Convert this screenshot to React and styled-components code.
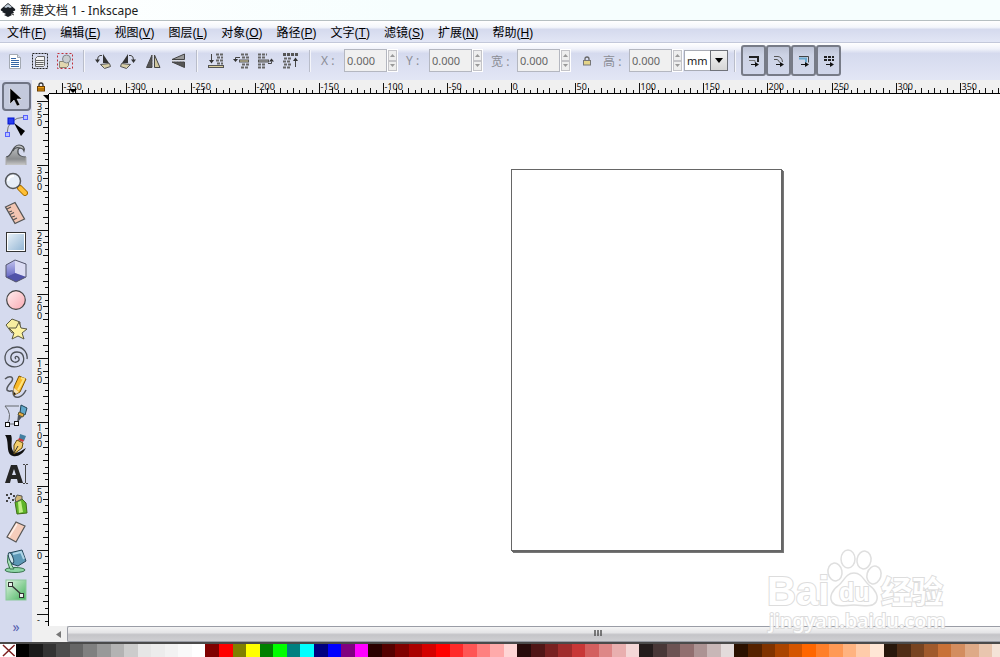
import React, { useEffect, useState } from "react";
import styled, { createGlobalStyle } from "styled-components";

const colors = {
  panel: "#d5daee",
  panelLight: "#e2e6f5",
  ruler: "#f0f0f0",
  text: "#1a1a1a",
  disabled: "#8b8d96",
  edge: "#9a9da6",
};

const fonts = `"Noto Sans", "Noto Sans CJK SC", sans-serif`;
const menuFonts = `"Liberation Sans", "Noto Sans CJK SC", sans-serif`;

const MM = 1.282;

const menus = [
  ["文件", "F"],
  ["编辑", "E"],
  ["视图", "V"],
  ["图层", "L"],
  ["对象", "O"],
  ["路径", "P"],
  ["文字", "T"],
  ["滤镜", "S"],
  ["扩展", "N"],
  ["帮助", "H"],
];

const swatches = `
000000 1a1a1a 333333 4d4d4d 666666 808080 999999 b3b3b3 cccccc e6e6e6 ececec f2f2f2 f9f9f9 ffffff
800000 ff0000 808000 ffff00 008000 00ff00 008080 00ffff 000080 0000ff 800080 ff00ff
2b0000 550000 800000 aa0000 d40000 ff0000 ff2a2a ff5555 ff8080 ffaaaa ffd5d5
280b0b 501616 782121 a02c2c c83737 d35f5f de8787 e9afaf f4d7d7
241c1c 483737 6c5353 916f6f ac9393 c8b7b7 e3dbdb
2b1100 552200 803300 aa4400 d45500 ff6600 ff7f2a ff9955 ffb380 ffccaa ffe6d5
28170b 502d16 784421 a05a2c c87137 d38d5f deaa87 e9c6af f4e3d7
`
  .trim()
  .split(/\s+/);

/* ---------- toolbar icons, 18x18 ---------- */

const PageIcon = () => (
  <Icon viewBox="0 0 18 18">
    <path d="M3.5 2.5h8l3 3v11h-11z" fill="#fff" stroke="#a3a9b2" />
    <path d="M11.5 2.500v3h3" fill="#dde3ea" stroke="#a3a9b2" />
    <path d="M5 6.500h5M5 8.500h8M5 10.500h8M5 12.500h8M5 14.500h8" stroke="#3465a4" />
  </Icon>
);

const LayersIcon = () => (
  <Icon viewBox="0 0 18 18">
    <rect x="1.500" y="1.500" width="15" height="15" fill="none" stroke="#222" strokeDasharray="2 1" />
    <path
      d="M4.500 6.500l2-2h7v3l-1 1h-8zM4.500 10.500h8l1-1v-2M4.500 8.500v6h8l1-1v-4M4.500 12.500h8"
      fill="#f4f4f4"
      stroke="#666"
    />
  </Icon>
);

const DeselectIcon = () => (
  <Icon viewBox="0 0 18 18">
    <rect x="1.500" y="1.500" width="15" height="15" fill="none" stroke="#c0303a" strokeDasharray="2 2" />
    <path d="M3.500 9.500h9v4l-2 2h-7z" fill="#e2d7b0" stroke="#8a8672" />
    <circle cx="10.500" cy="7" r="4" fill="#c9cdd0" stroke="#83878b" />
  </Icon>
);

const RotateIcon = ({ flip }) => (
  <Icon viewBox="0 0 18 18">
    <g transform={flip ? "matrix(-1 0 0 1 18 0)" : undefined}>
      <path d="M9 2v9h6z" fill="#333" />
      <path d="M6.500 12.500l9-1 1 3-6 2z" fill="#d8cfa8" stroke="#555" />
      <path d="M8 3.500H6Q3.500 4 3.500 8" fill="none" stroke="#444" />
      <path d="M1 7.500h5l-2.500 3.500z" fill="#333" />
    </g>
  </Icon>
);

const FlipIcon = ({ vertical }) => (
  <Icon viewBox="0 0 18 18">
    <g transform={vertical ? "rotate(-90 9 9)" : undefined}>
      <path d="M8 3v12.500H2.500z" fill="#555" stroke="#444" />
      <path d="M10.500 3v12.500H16z" fill={vertical ? "#999" : "#cfc69d"} stroke="#444" />
      <path d="M9.300 3v13" stroke="#ddd" strokeDasharray="2 1" />
    </g>
  </Icon>
);

const StackIcon = ({ kind }) => (
  <Icon viewBox="0 0 18 18">
    {kind === "bottom" && (
      <>
        <path d="M9 2.500h8M10 5.500h6M9 8.500h8M10 11.500h6" stroke="#666" strokeWidth="2" strokeDasharray="3 1" />
        <rect x="1.500" y="13.500" width="15" height="2" fill="#d9cf9c" stroke="#555" />
        <path d="M4.500 2v7" stroke="#444" />
        <path d="M2 8h5l-2.500 3.500z" fill="#333" />
      </>
    )}
    {kind === "down" && (
      <>
        <path d="M9 2.500h8M10 5.500h7M10 12.500h7M9 15.500h8" stroke="#666" strokeWidth="2" strokeDasharray="3 1" />
        <rect x="7.500" y="8" width="9" height="2" fill="#d9cf9c" stroke="#555" />
        <path d="M8 5.500H3.500v2" fill="none" stroke="#444" />
        <path d="M1 7h5l-2.500 3z" fill="#333" />
      </>
    )}
    {kind === "up" && (
      <>
        <path d="M1 2.500h9M1 5.500h8M1 12.500h8M1 15.500h7" stroke="#666" strokeWidth="2" strokeDasharray="3 1" />
        <rect x="1.500" y="8" width="10" height="2" fill="#aaa" stroke="#555" />
        <path d="M11 11.500h3.500v-2" fill="none" stroke="#444" />
        <path d="M12 9.500h5l-2.500-3z" fill="#333" />
      </>
    )}
    {kind === "top" && (
      <>
        <path d="M1 2.500h16" stroke="#555" strokeWidth="3" strokeDasharray="3 1" />
        <path d="M2 6.500h7M1 9.500h8M2 12.500h7M1 15.500h8" stroke="#666" strokeWidth="2" strokeDasharray="3 1" />
        <path d="M13.500 15V8" stroke="#444" />
        <path d="M11 9h5l-2.500-3.500z" fill="#333" />
      </>
    )}
  </Icon>
);

const SnapIcon = ({ kind }) => (
  <Icon viewBox="0 0 18 18">
    {kind === 0 && (
      <>
        <path d="M4 5h9v5" fill="none" stroke="#222" strokeWidth="2" />
        <path d="M4 8.500h6v2" fill="none" stroke="#777" />
      </>
    )}
    {kind === 1 && (
      <path d="M4 4.500h4Q12 5 12.500 10M4 7.500h3Q9 8 9.500 10.500" fill="none" stroke="#555" />
    )}
    {kind === 2 && (
      <>
        <path d="M4 4.500h9.500v6" fill="none" stroke="#444" />
        <path d="M4 6.500h7v4" fill="none" stroke="#69a9cf" strokeWidth="2" />
      </>
    )}
    {kind === 3 && <path d="M4 5h10M4 8h10" stroke="#222" strokeWidth="2" strokeDasharray="3 1" />}
    <path d="M6 12.500h5" stroke="#111" />
    <path d="M10 10l4 2.500-4 2.500z" fill="#111" />
  </Icon>
);

const LockIcon = ({ gold }) => (
  <Icon viewBox="0 0 10 10" $size={10}>
    <path d="M3 5V3q0-2 2-2t2 2v2" fill="none" stroke={gold ? "#333" : "#666"} strokeWidth="1.300" />
    <rect
      x="1.500"
      y="4.500"
      width="7"
      height="4.500"
      fill={gold ? "#f0a010" : "#e4d488"}
      stroke={gold ? "#6b3c00" : "#777"}
    />
    {gold && <path d="M2 7h6" stroke="#7a4a00" />}
  </Icon>
);

/* ---------- toolbox icons, 24x24 ---------- */

const tools = [
  {
    name: "选择工具",
    art: <path d="M6 3v16l4-4 3 6 3-1-3-6h5z" fill="#000" stroke="#fff" strokeWidth=".5" />,
  },
  {
    name: "节点工具",
    art: (
      <>
        <path d="M3 20Q3 4 21 3" fill="none" stroke="#777" />
        <rect x="1.500" y="18.500" width="4" height="4" fill="#b9c0ff" stroke="#5560ff" />
        <rect x="19.500" y="1.500" width="4" height="4" fill="#b9c0ff" stroke="#5560ff" />
        <rect x="4" y="4" width="6" height="6" fill="#2a3cf0" stroke="#0014d0" />
        <path d="M10 9l11 8-4 5z" fill="#000" />
      </>
    ),
  },
  {
    name: "调整工具",
    art: (
      <>
        <path d="M2 22v-8c7 0 5-12 13-12 4 0 6 3 5 6-2-3-5-3-6 0-1 4 3 6 8 6v8z" fill="url(#waveFill)" />
        <path
          d="M2 14c7 0 5-12 13-12 4 0 6 3 5 6-1-3-5-4-6-1-1 5 3 7 8 7M9 8c1-3 4-4 7-3"
          fill="none"
          stroke="#4c4f52"
          strokeWidth="1.200"
        />
        <path d="M2 14v8M22 14v8" stroke="#aaa" />
      </>
    ),
  },
  {
    name: "缩放工具",
    art: (
      <>
        <path d="M16 16l5 5" stroke="#a86f00" strokeWidth="6" strokeLinecap="round" />
        <path d="M16 16l5 5" stroke="#ffbf35" strokeWidth="4" strokeLinecap="round" />
        <circle cx="9" cy="9" r="7.500" fill="#e7eef8" stroke="#55585c" strokeWidth="1.500" />
        <path d="M4 9q1-5 6-5" fill="none" stroke="#fff" strokeWidth="2" />
      </>
    ),
  },
  {
    name: "测量工具",
    art: (
      <>
        <path d="M1.500 6L11 1.500 20.500 18 11 22.500z" fill="#f2c5b2" stroke="#555" strokeWidth="1.300" />
        <path d="M3 8l4-2M5 11l3-1M6 13.500l4-2M8 16l3-1M9 19l4-2" stroke="#555" strokeWidth="1.200" />
      </>
    ),
  },
  {
    name: "矩形工具",
    art: (
      <>
        <rect x="2.500" y="2.500" width="19" height="19" fill="url(#blueFill)" stroke="#333" />
        <rect x="3.500" y="3.500" width="17" height="17" fill="none" stroke="#fff" />
      </>
    ),
  },
  {
    name: "3D 立方体工具",
    art: (
      <>
        <path d="M2 6l9-5 11 4v13l-10 5-10-5z" fill="#9a9bd8" />
        <path d="M2 6l9-5v13l-9 4z" fill="url(#boxFill)" />
        <path d="M11 1l11 4v13l-11-4z" fill="#dcddf4" />
        <path d="M2 18l9-4 11 4-10 5z" fill="#5052a8" />
        <path d="M2 6l9-5 11 4v13l-10 5-10-5z" fill="none" stroke="#55576d" />
      </>
    ),
  },
  {
    name: "圆形工具",
    art: <circle cx="12" cy="12" r="9.300" fill="url(#pinkFill)" stroke="#444" strokeWidth="1.200" />,
  },
  {
    name: "星形工具",
    art: (
      <>
        <path d="M2 8l6-6 8 3v8l-8 3z" fill="#f6eda0" stroke="#5b5942" />
        <path d="M15 5l2 6 6 1-5 4 2 6-6-3-6 3 2-6-5-5h7z" fill="#fdf3a2" stroke="#5b5942" />
      </>
    ),
  },
  {
    name: "螺旋工具",
    art: (
      <path
        d="M12 13c-2-1 0-4 2-2 3 3-1 6-4 5-5-2-4-10 3-10 8 0 9 11 2 14C7 23 1 18 1 12 1 5 7 1 13 1c7 0 11 7 10 12"
        fill="none"
        stroke="#4c5057"
        strokeWidth="1.300"
      />
    ),
  },
  {
    name: "铅笔工具",
    art: (
      <>
        <path
          d="M1 4c5-4 9-2 7 2-2 3-6 6-5 9 2 3 6-1 6 2 0 4 2 6 6 5 4-1 6-5 7-7"
          fill="none"
          stroke="#55585e"
          strokeWidth="1.500"
        />
        <path d="M15 1l7 3-6 13-6 3V12z" fill="#f9b928" stroke="#805500" />
        <path d="M17 3l3 1-6 11" fill="none" stroke="#ffe37c" strokeWidth="2" />
        <path d="M10 13l5 4-5 3z" fill="#f5e0b0" />
        <path d="M10 17l2 2-2 1z" fill="#111" />
      </>
    ),
  },
  {
    name: "贝塞尔工具",
    art: (
      <>
        <path d="M3 20Q9 10 1 2h14M4 20h9" fill="none" stroke="#65686d" />
        <path d="M17 1l6 3-2 7-5-2z" fill="#5fa7cb" stroke="#245" />
        <path d="M15 8l5 2-1 3-5-2z" fill="#e5a941" stroke="#553" />
        <path d="M14 11l4 2-5 6z" fill="#4c5259" />
        <rect x="1.500" y="18.500" width="4" height="4" fill="#fff" stroke="#111" />
        <rect x="10.500" y="17.500" width="4" height="4" fill="#fff" stroke="#111" />
      </>
    ),
  },
  {
    name: "书法工具",
    art: (
      <>
        <path d="M1 2h6c2 4-1 11 2 16 3 4 8 0 13-3-3 6-8 9-13 8C1 21 6 9 1 2z" fill="#111" />
        <path d="M16 1l6 2-2 5-5-2z" fill="#427fa1" />
        <path d="M15 5l5 2-1 2-5-2z" fill="#c83737" />
        <path d="M13 7l6 3-1 5-8 6V12z" fill="#f4cf6d" stroke="#654c0a" />
        <path d="M10 20l4-7" stroke="#333" />
      </>
    ),
  },
  {
    name: "文字工具",
    art: (
      <>
        <path d="M1 21L7 3h6l6 18h-5l-1-4H7l-1 4zM8 13h4l-2-6z" fill="#252525" fillRule="evenodd" />
        <path d="M19 2.500h2M22 2.500h2M21.500 3v18M19 21.500h2M22 21.500h2" stroke="#444" />
      </>
    ),
  },
  {
    name: "喷绘工具",
    art: (
      <>
        <path d="M2 3h2v2H2zM6 2h2v2H6zM9 4h2v2H9zM4 6h2v2H4zM8 8h2v2H8zM2 9h2v2H2zM6 11h1v1H6z" fill="#444" />
        <path d="M11 11l7-3 4 4 1 10-10 1z" fill="#5fb52a" stroke="#416d17" />
        <path d="M14 11l3-1 2 11-4 1z" fill="#c2ef86" />
        <path d="M11 8l2-4 5 1v3l-6 3z" fill="#d0b777" stroke="#555" />
      </>
    ),
  },
  {
    name: "橡皮工具",
    art: (
      <>
        <path d="M3 17L12 2l9 4-9 16z" fill="#f5cdbb" stroke="#555" strokeWidth="1.200" />
        <path d="M5 17l8-13" stroke="#fff0e8" strokeWidth="1.500" />
      </>
    ),
  },
  {
    name: "油漆桶工具",
    art: (
      <>
        <ellipse cx="11" cy="21" rx="10" ry="2.500" fill="#8ed6a6" stroke="#39734d" />
        <path d="M4 6Q2 13 6 20h4Q5 13 8 8z" fill="#a9e3bb" stroke="#39734d" />
        <path d="M5 4l13-3 4 11-8 5-6-2z" fill="#5c98b6" stroke="#27485a" />
        <path d="M9 5l8-2 3 7" fill="none" stroke="#add4e6" strokeWidth="2" />
        <ellipse cx="7" cy="9" rx="2" ry="5.500" transform="rotate(-20 7 9)" fill="#cfe6ee" stroke="#27485a" />
      </>
    ),
  },
  {
    name: "连接工具",
    art: (
      <>
        <rect x="2" y="2" width="20" height="20" fill="url(#greenFill)" stroke="#8cc89b" />
        <path d="M7 7l11 10" stroke="#333" strokeWidth="1.300" />
        <rect x="4.500" y="4.500" width="4" height="4" fill="#e8f4ea" stroke="#333" />
        <rect x="15.500" y="15.500" width="4" height="4" fill="#e8f4ea" stroke="#333" />
      </>
    ),
  },
];

const Gradients = () => (
  <Defs aria-hidden="true">
    <defs>
      <linearGradient id="blueFill" x2="1" y2="1">
        <stop stopColor="#eef4fa" />
        <stop offset="1" stopColor="#8db2d2" />
      </linearGradient>
      <linearGradient id="waveFill" x2="0" y2="1">
        <stop stopColor="#c4c6c8" />
        <stop offset=".7" stopColor="#8a8c8e" />
        <stop offset="1" stopColor="#c8c8c8" />
      </linearGradient>
      <linearGradient id="boxFill" x2="0" y2="1">
        <stop stopColor="#c3c4ee" />
        <stop offset="1" stopColor="#6668c4" />
      </linearGradient>
      <linearGradient id="pinkFill" x2="1" y2="1">
        <stop stopColor="#fff0f0" />
        <stop offset="1" stopColor="#f9a9b2" />
      </linearGradient>
      <linearGradient id="greenFill" x2="1" y2="1">
        <stop stopColor="#e2f5e4" />
        <stop offset="1" stopColor="#45b25c" />
      </linearGradient>
    </defs>
  </Defs>
);

/* ---------- rulers ---------- */

const useWindowSize = () => {
  const [size, setSize] = useState([window.innerWidth, window.innerHeight]);

  useEffect(() => {
    const update = () => setSize([window.innerWidth, window.innerHeight]);
    window.addEventListener("resize", update);
    return () => window.removeEventListener("resize", update);
  }, []);

  return size;
};

const tickRange = (from, to) => {
  const list = [];
  for (let mm = from; mm <= to; mm += 5) list.push(mm);
  return list;
};

const tickLength = (mm, major) => {
  if (mm % 50 === 0) return major;
  return mm % 10 === 0 ? 5 : 3;
};

const HorizontalRuler = ({ origin, length }) => (
  <Ruler>
    {tickRange(-355, Math.floor((length - origin) / MM / 5) * 5).map((mm) => {
      const x = Math.round(origin + mm * MM) + 0.5;
      return (
        <g key={mm}>
          <path d={`M${x} 13v-${tickLength(mm, 10)}`} stroke="#111" />
          {mm % 50 === 0 && x + 20 < length && (
            <text x={x + 1} y="10">
              {mm}
            </text>
          )}
        </g>
      );
    })}
    <path d="M20 9h8l-4 4z" fill="#000" />
    <rect y="13" width="100%" height="1" fill="#000" />
  </Ruler>
);

const VerticalRuler = ({ origin, length }) => (
  <Ruler>
    {tickRange(-Math.floor((length - origin) / MM / 5) * 5, 355).map((mm) => {
      const y = Math.round(origin - mm * MM) + 0.5;
      return (
        <g key={mm}>
          <path d={`M15 ${y}h-${tickLength(mm, 11)}`} stroke="#111" />
          {mm % 50 === 0 &&
            String(mm)
              .split("")
              .filter((_, i) => y + 10 + i * 8 < length)
              .map((digit, i) => (
                <text key={i} x="4" y={y + 8 + i * 8}>
                  {digit}
                </text>
              ))}
        </g>
      );
    })}
    <path d="M10 1h5v5z" fill="#000" />
    <rect x="15" width="1" height="100%" fill="#000" />
  </Ruler>
);

const NumberField = ({ id, label, wide }) => (
  <Field>
    <FieldLabel htmlFor={id} $wide={wide}>
      {label} :
    </FieldLabel>
    <FieldInput id={id} defaultValue="0.000" disabled />
    <Spinner>
      <SpinButton aria-label="增加" disabled>
        <svg width="5" height="3">
          <path d="M0 3h5L2.500 0z" fill="#999" />
        </svg>
      </SpinButton>
      <SpinButton aria-label="减少" disabled>
        <svg width="5" height="3">
          <path d="M0 0h5L2.500 3z" fill="#999" />
        </svg>
      </SpinButton>
    </Spinner>
  </Field>
);

const Watermark = () => (
  <Mark viewBox="0 0 184 88">
    <g fill="#fff" stroke="#dcdcdc" strokeWidth="1.500">
      <ellipse cx="69" cy="24" rx="7" ry="9" transform="rotate(-10 69 24)" />
      <ellipse cx="82" cy="11" rx="7" ry="9" />
      <ellipse cx="98" cy="12" rx="7" ry="9" transform="rotate(10 98 12)" />
      <ellipse cx="108" cy="27" rx="7" ry="9" transform="rotate(15 108 27)" />
      <path d="M88 25c8 0 10 8 15 12 7 5 10 12 7 17-4 6-13 3-22 3s-18 3-22-3c-3-5 0-12 7-17 5-4 7-12 15-12z" />
    </g>
    <MarkText x="1" y="57" $size={40} $latin>
      Bai
    </MarkText>
    <MarkText x="73" y="53" $size={25} $latin>
      du
    </MarkText>
    <MarkText x="115" y="55" $size={31}>
      经验
    </MarkText>
    <MarkText x="3" y="80" $size={20}>
      jingyan.baidu.com
    </MarkText>
  </Mark>
);

const App = () => {
  const [tool, setTool] = useState(0);
  const [width, height] = useWindowSize();

  return (
    <Window>
      <GlobalStyle />
      <Gradients />
      <TitleBar>
        <Icon viewBox="0 0 16 16" $size={16}>
          <path d="M8 1l7 6q1 2-2 2l1 2-3 1 1 1-4 2-4-2 2-1-4-2 1-1Q0 9 1 7z" fill="#1b1f25" />
          <path d="M8 2l4 3-2 1-2-1-2 1-2-1z" fill="#c3cfdb" />
          <path d="M12 12l2 1" stroke="#333" />
        </Icon>
        <Title>新建文档 1 - Inkscape</Title>
      </TitleBar>
      <MenuBar>
        {menus.map(([label, key]) => (
          <MenuButton key={key}>
            {label}(<u>{key}</u>)
          </MenuButton>
        ))}
      </MenuBar>
      <Toolbar>
        <ToolButton aria-label="全选"><PageIcon /></ToolButton>
        <ToolButton aria-label="在所有图层中全选"><LayersIcon /></ToolButton>
        <ToolButton aria-label="取消选择"><DeselectIcon /></ToolButton>
        <Separator />
        <ToolButton aria-label="逆时针旋转"><RotateIcon /></ToolButton>
        <ToolButton aria-label="顺时针旋转"><RotateIcon flip /></ToolButton>
        <ToolButton aria-label="水平翻转"><FlipIcon /></ToolButton>
        <ToolButton aria-label="垂直翻转"><FlipIcon vertical /></ToolButton>
        <Separator />
        <ToolButton aria-label="降到底层"><StackIcon kind="bottom" /></ToolButton>
        <ToolButton aria-label="降低一层"><StackIcon kind="down" /></ToolButton>
        <ToolButton aria-label="提升一层"><StackIcon kind="up" /></ToolButton>
        <ToolButton aria-label="升到顶层"><StackIcon kind="top" /></ToolButton>
        <Separator />
        <Fields>
          <NumberField id="pos-x" label="X" />
          <NumberField id="pos-y" label="Y" />
          <NumberField id="width" label="宽" wide />
          <LockButton aria-label="锁定宽高比"><LockIcon /></LockButton>
          <NumberField id="height" label="高" wide />
        </Fields>
        <UnitBox>
          <UnitSelect aria-label="单位" defaultValue="mm">
            <option>mm</option>
            <option>px</option>
          </UnitSelect>
          <UnitArrow>
            <svg width="8" height="5">
              <path d="M0 0h8L4 5z" fill="#000" />
            </svg>
          </UnitArrow>
        </UnitBox>
        <Separator />
        {["缩放笔廓", "缩放圆角", "变换渐变", "变换图案"].map((name, i) => (
          <ToggleButton key={name} aria-label={name} aria-pressed="true">
            <SnapIcon kind={i} />
          </ToggleButton>
        ))}
      </Toolbar>
      <Main>
        <Toolbox>
          {tools.map(({ name, art }, i) => (
            <Tool key={name} aria-label={name} $active={i === tool} onClick={() => setTool(i)}>
              <Icon viewBox="0 0 24 24" $size={24}>
                {art}
              </Icon>
            </Tool>
          ))}
          <More aria-label="更多工具">»</More>
        </Toolbox>
        <Workspace>
          <Corner aria-label="锁定参考线"><LockIcon gold /></Corner>
          <HorizontalRuler origin={462} length={width - 49} />
          <VerticalRuler origin={456} length={height - 125} />
          <Canvas>
            <Sheet />
          </Canvas>
          <RulerEnd />
          <Scrollbar>
            <ScrollArrow aria-label="向左滚动">
              <svg width="5" height="7">
                <path d="M5 0v7L0 3.500z" fill="#777" />
              </svg>
            </ScrollArrow>
            <ScrollThumb>
              <svg width="8" height="6">
                <path d="M1 0v6M4 0v6M7 0v6" stroke="#555" strokeWidth="1.500" />
              </svg>
            </ScrollThumb>
          </Scrollbar>
        </Workspace>
        <Watermark />
      </Main>
      <Palette>
        <Swatch aria-label="无" $color="#ffffff">
          <NoColor viewBox="0 0 14 14" preserveAspectRatio="none">
            <path d="M1 1l12 12M13 1L1 13" stroke="#7d1f1f" strokeWidth="1.500" />
          </NoColor>
        </Swatch>
        {swatches.map((color, i) => (
          <Swatch key={i} aria-label={`#${color}`} $color={`#${color}`} />
        ))}
      </Palette>
    </Window>
  );
};

const GlobalStyle = createGlobalStyle`
  * {
    box-sizing: border-box;
  }
  body {
    margin: 0;
    font-family: ${fonts};
    font-size: 12px;
    color: ${colors.text};
  }
  button, input, select {
    margin: 0;
    padding: 0;
    border: 0;
    background: none;
    font: inherit;
    color: inherit;
  }
  svg {
    display: block;
    flex: none;
  }
`;

const Window = styled.div`
  display: flex;
  flex-direction: column;
  height: 100vh;
  overflow: hidden;
  background: #fff;
`;

const Defs = styled.svg`
  position: absolute;
  width: 0;
  height: 0;
`;

const Icon = styled.svg`
  width: ${(props) => props.$size || 18}px;
  height: ${(props) => props.$size || 18}px;
`;

const TitleBar = styled.header`
  display: flex;
  flex: none;
  align-items: center;
  gap: 4px;
  height: 21px;
  background: linear-gradient(90deg, #fff, #f6fefe 40%);
  border-bottom: 1px solid #b6bfc2;
`;

const Title = styled.h1`
  margin: 0;
  font-size: 12px;
  font-weight: 400;
`;

const MenuBar = styled.nav`
  display: flex;
  flex: none;
  align-items: center;
  gap: 14px;
  height: 22px;
  padding: 0 7px;
  background: linear-gradient(#fff, #f3f5fb 30%, ${colors.panel} 40%, ${colors.panelLight});
  border-bottom: 1px solid #c3c8da;
`;

const MenuButton = styled.button`
  font-family: ${menuFonts};
  white-space: nowrap;
  color: #000;
`;

const Toolbar = styled.div`
  display: flex;
  flex: none;
  align-items: center;
  height: 37px;
  padding: 0 2px 2px;
  background: linear-gradient(#fff, #f0f2fa 16%, ${colors.panel} 28%, ${colors.panelLight});
`;

const ToolButton = styled.button`
  display: flex;
  flex: none;
  align-items: center;
  justify-content: center;
  width: 25px;
  height: 30px;
`;

const Separator = styled.div`
  flex: none;
  width: 2px;
  height: 22px;
  margin: 0 5px 0 6px;
  background: #b9bdca;
  border-right: 1px solid #f4f5fa;
`;

const Fields = styled.div`
  display: flex;
  align-items: center;
  gap: 8px;
  padding-left: 5px;
`;

const Field = styled.div`
  display: flex;
  align-items: center;
`;

const FieldLabel = styled.label`
  flex: none;
  width: ${(props) => (props.$wide ? 26 : 23)}px;
  color: ${colors.disabled};
  white-space: nowrap;
`;

const FieldInput = styled.input`
  width: 43px;
  height: 23px;
  padding: 0 2px;
  font-size: 11px;
  color: #666;
  background: #f0f0f0;
  border: 1px solid #b4b7c0;
`;

const Spinner = styled.div`
  display: flex;
  flex-direction: column;
  width: 11px;
  height: 23px;
  border: 1px solid #fff;
`;

const SpinButton = styled.button`
  display: flex;
  flex: 1;
  align-items: center;
  justify-content: center;
  background: #eee;
  border: 1px solid #c4c4c8;
`;

const LockButton = styled(ToolButton)`
  width: 16px;
`;

const UnitBox = styled.div`
  position: relative;
  flex: none;
  width: 44px;
  height: 21px;
  margin-left: 1px;
`;

const UnitSelect = styled.select`
  width: 100%;
  height: 100%;
  padding-left: 2px;
  font-size: 11px;
  background: #fff;
  border: 1px solid #a9acb5;
  appearance: none;
`;

const UnitArrow = styled.span`
  position: absolute;
  top: 0;
  right: 0;
  bottom: 0;
  display: flex;
  align-items: center;
  justify-content: center;
  width: 18px;
  background: linear-gradient(#f4f4f4, #d6d6d6);
  border: 1px solid #70737a;
  pointer-events: none;
`;

const ToggleButton = styled(ToolButton)`
  height: 31px;
  background: linear-gradient(#bcc2d4, #cdd3e5 30%, #d0d6ea);
  border: 2px solid #777b87;
  border-radius: 3px;
`;

const Main = styled.main`
  position: relative;
  display: flex;
  flex: 1;
  min-height: 0;
`;

const Toolbox = styled.aside`
  display: flex;
  flex: none;
  flex-direction: column;
  align-items: center;
  width: 33px;
  padding-top: 2px;
  background: ${colors.panel};
  border-right: 1px solid ${colors.ruler};
`;

const Tool = styled.button`
  display: flex;
  flex: none;
  align-items: center;
  justify-content: center;
  width: 29px;
  height: 29px;
  border: ${(props) => (props.$active ? "2px solid #6f7484" : "0")};
  border-radius: 4px;
  background: ${(props) => (props.$active ? "#c3c9dc" : "none")};
`;

const More = styled.button`
  margin: auto 0 5px;
  font-size: 14px;
  line-height: 20px;
  color: #5560b0;
`;

const Workspace = styled.section`
  display: grid;
  flex: 1;
  grid-template-columns: 16px 1fr;
  grid-template-rows: 14px 1fr 16px;
  min-width: 0;
`;

const Corner = styled.button`
  display: flex;
  align-items: center;
  justify-content: center;
  background: ${colors.ruler};
`;

const Ruler = styled.svg`
  width: 100%;
  height: 100%;
  min-height: 0;
  overflow: hidden;
  background: ${colors.ruler};
  font-size: 9px;
  fill: #111;
`;

const Canvas = styled.div`
  position: relative;
  min-height: 0;
  overflow: hidden;
  background: #fff;
`;

/* the sheet sits at the document origin of both rulers */
const Sheet = styled.div`
  position: absolute;
  left: 462px;
  top: 75px;
  width: 271px;
  height: 382px;
  background: #fff;
  border: 1px solid #666;
  box-shadow: 1px 1px 0 #666, 2px 2px 0 #777;
`;

const RulerEnd = styled.div`
  background: ${colors.ruler};
`;

const Scrollbar = styled.div`
  display: flex;
  min-width: 0;
  background: #f0f0f0;
`;

const ScrollArrow = styled.button`
  display: flex;
  flex: none;
  align-items: center;
  justify-content: center;
  width: 18px;
`;

const ScrollThumb = styled.div`
  display: flex;
  flex: 1;
  justify-content: center;
  padding: 3px 0 0 128px;
  background: linear-gradient(#f4f4f4, #e4e4e6 40%, #c4c4c8 55%, #cfcfd2);
  border: 1px solid ${colors.edge};
  border-right: 0;
  border-radius: 2px 0 0 2px;
`;

const Mark = styled.svg`
  position: absolute;
  right: 50px;
  bottom: 6px;
  width: 184px;
  height: 88px;
  overflow: visible;
  opacity: 0.9;
  pointer-events: none;
`;

const MarkText = styled.text`
  font-family: ${(props) => (props.$latin ? menuFonts : fonts)};
  font-size: ${(props) => props.$size}px;
  font-weight: ${(props) => (props.$size > 20 ? 700 : 500)};
  fill: #fff;
  stroke: #dadada;
  stroke-width: 2px;
  paint-order: stroke;
`;

const Palette = styled.footer`
  display: flex;
  flex: none;
  height: 15px;
  padding-left: 2px;
  margin-right: -6px;
  background: #fff;
  border-top: 2px solid #4a4a4a;
`;

const Swatch = styled.button`
  flex: 1 1 0;
  min-width: 0;
  background: ${(props) => props.$color};
`;

const NoColor = styled.svg`
  width: 100%;
  height: 100%;
`;

export default App;
